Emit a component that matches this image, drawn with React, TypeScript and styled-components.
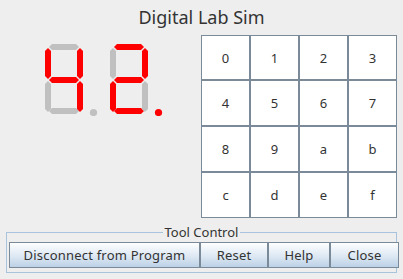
import styled, { createGlobalStyle } from "styled-components";

const GlobalStyle = createGlobalStyle`
  html, body {
    margin: 0;
    background: #eeeeee;
    font-family: "Noto Sans", "DejaVu Sans", sans-serif;
  }
  * {
    box-sizing: border-box;
  }
`;

type Seg = "a" | "b" | "c" | "d" | "e" | "f" | "g";

// segment outlines, local coordinates of one digit (38 x 70)
const SEGMENTS: Record<Seg, string> = {
  a: "4,3 7,0 31,0 34,3 31,6 7,6",
  g: "4,36 7,33 31,33 34,36 31,39 7,39",
  d: "4,67 7,64 31,64 34,67 31,70 7,70",
  f: "3,4 6,7 6,32 3,35 0,32 0,7",
  b: "35,4 38,7 38,32 35,35 32,32 32,7",
  e: "3,37 6,40 6,65 3,68 0,65 0,40",
  c: "35,37 38,40 38,65 35,68 32,65 32,40",
};

const ON = "#ff0000";
const OFF = "#c0c0c0";

const digits: { lit: Seg[]; dot: boolean }[] = [
  { lit: ["f", "b", "g", "c"], dot: false },
  { lit: ["a", "b", "g", "e", "d"], dot: true },
];

const keys = ["0", "1", "2", "3", "4", "5", "6", "7", "8", "9", "a", "b", "c", "d", "e", "f"];

const controls = [
  { label: "Disconnect from Program", width: 191 },
  { label: "Reset", width: 68 },
  { label: "Help", width: 62 },
  { label: "Close", width: 69 },
];

function Digit({ lit, dot }: { lit: Seg[]; dot: boolean }) {
  return (
    <svg width="56" height="72" viewBox="0 0 56 72">
      {(Object.keys(SEGMENTS) as Seg[]).map((s) => (
        <polygon key={s} points={SEGMENTS[s]} fill={lit.includes(s) ? ON : OFF} />
      ))}
      <circle cx="48.5" cy="68.5" r="3.6" fill={dot ? ON : OFF} />
    </svg>
  );
}

export default function App() {
  return (
    <Frame>
      <GlobalStyle />
      <Title>Digital Lab Sim</Title>
      <Main>
        <Display>
          {digits.map((d, i) => (
            <Digit key={i} lit={d.lit} dot={d.dot} />
          ))}
        </Display>
        <Keypad>
          {keys.map((k) => (
            <Key key={k}>{k}</Key>
          ))}
        </Keypad>
      </Main>
      <ToolControl>
        <Legend>Tool Control</Legend>
        <ButtonRow>
          {controls.map((c) => (
            <ControlButton key={c.label} $width={c.width}>
              {c.label}
            </ControlButton>
          ))}
        </ButtonRow>
      </ToolControl>
    </Frame>
  );
}

const Frame = styled.div`
  width: 403px;
  height: 279px;
  display: flex;
  flex-direction: column;
  overflow: hidden;
`;

const Title = styled.div`
  height: 35px;
  display: flex;
  align-items: center;
  justify-content: center;
  padding-bottom: 2px;
  font-size: 18px;
  color: #333333;
`;

const Main = styled.div`
  display: flex;
  height: 183px;
`;

const Display = styled.div`
  width: 201px;
  display: flex;
  align-items: flex-start;
  gap: 9px;
  padding: 9px 0 0 45px;
`;

const Keypad = styled.div`
  width: 196px;
  display: grid;
  grid-template-columns: repeat(4, 49px);
  grid-template-rows: 45px 46px 46px 46px;
`;

const Key = styled.button`
  margin: 0;
  padding: 0;
  border: 1px solid #7a8a99;
  background: #ffffff;
  font-family: "Noto Sans", "DejaVu Sans", sans-serif;
  font-size: 13px;
  color: #333333;
`;

const ToolControl = styled.fieldset`
  margin: 6px 6px 0 6px;
  min-width: 0;
  padding: 2px 2px 4px 2px;
  border: 1px solid #a8c3dc;
`;

const Legend = styled.legend`
  margin: 0 auto;
  padding: 0 2px;
  font-size: 13px;
  line-height: 16px;
  color: #333333;
`;

const ButtonRow = styled.div`
  display: flex;
  width: 390px;
`;

const ControlButton = styled.button<{ $width: number }>`
  flex: 0 0 ${(p) => p.$width}px;
  height: 26px;
  margin: 0;
  padding: 0;
  border: 1px solid #7a8a99;
  background: linear-gradient(#fdfeff, #dde8f3 55%, #bcd1e6);
  font-family: "Noto Sans", "DejaVu Sans", sans-serif;
  font-size: 13px;
  letter-spacing: 0.2px;
  color: #333333;
`;
